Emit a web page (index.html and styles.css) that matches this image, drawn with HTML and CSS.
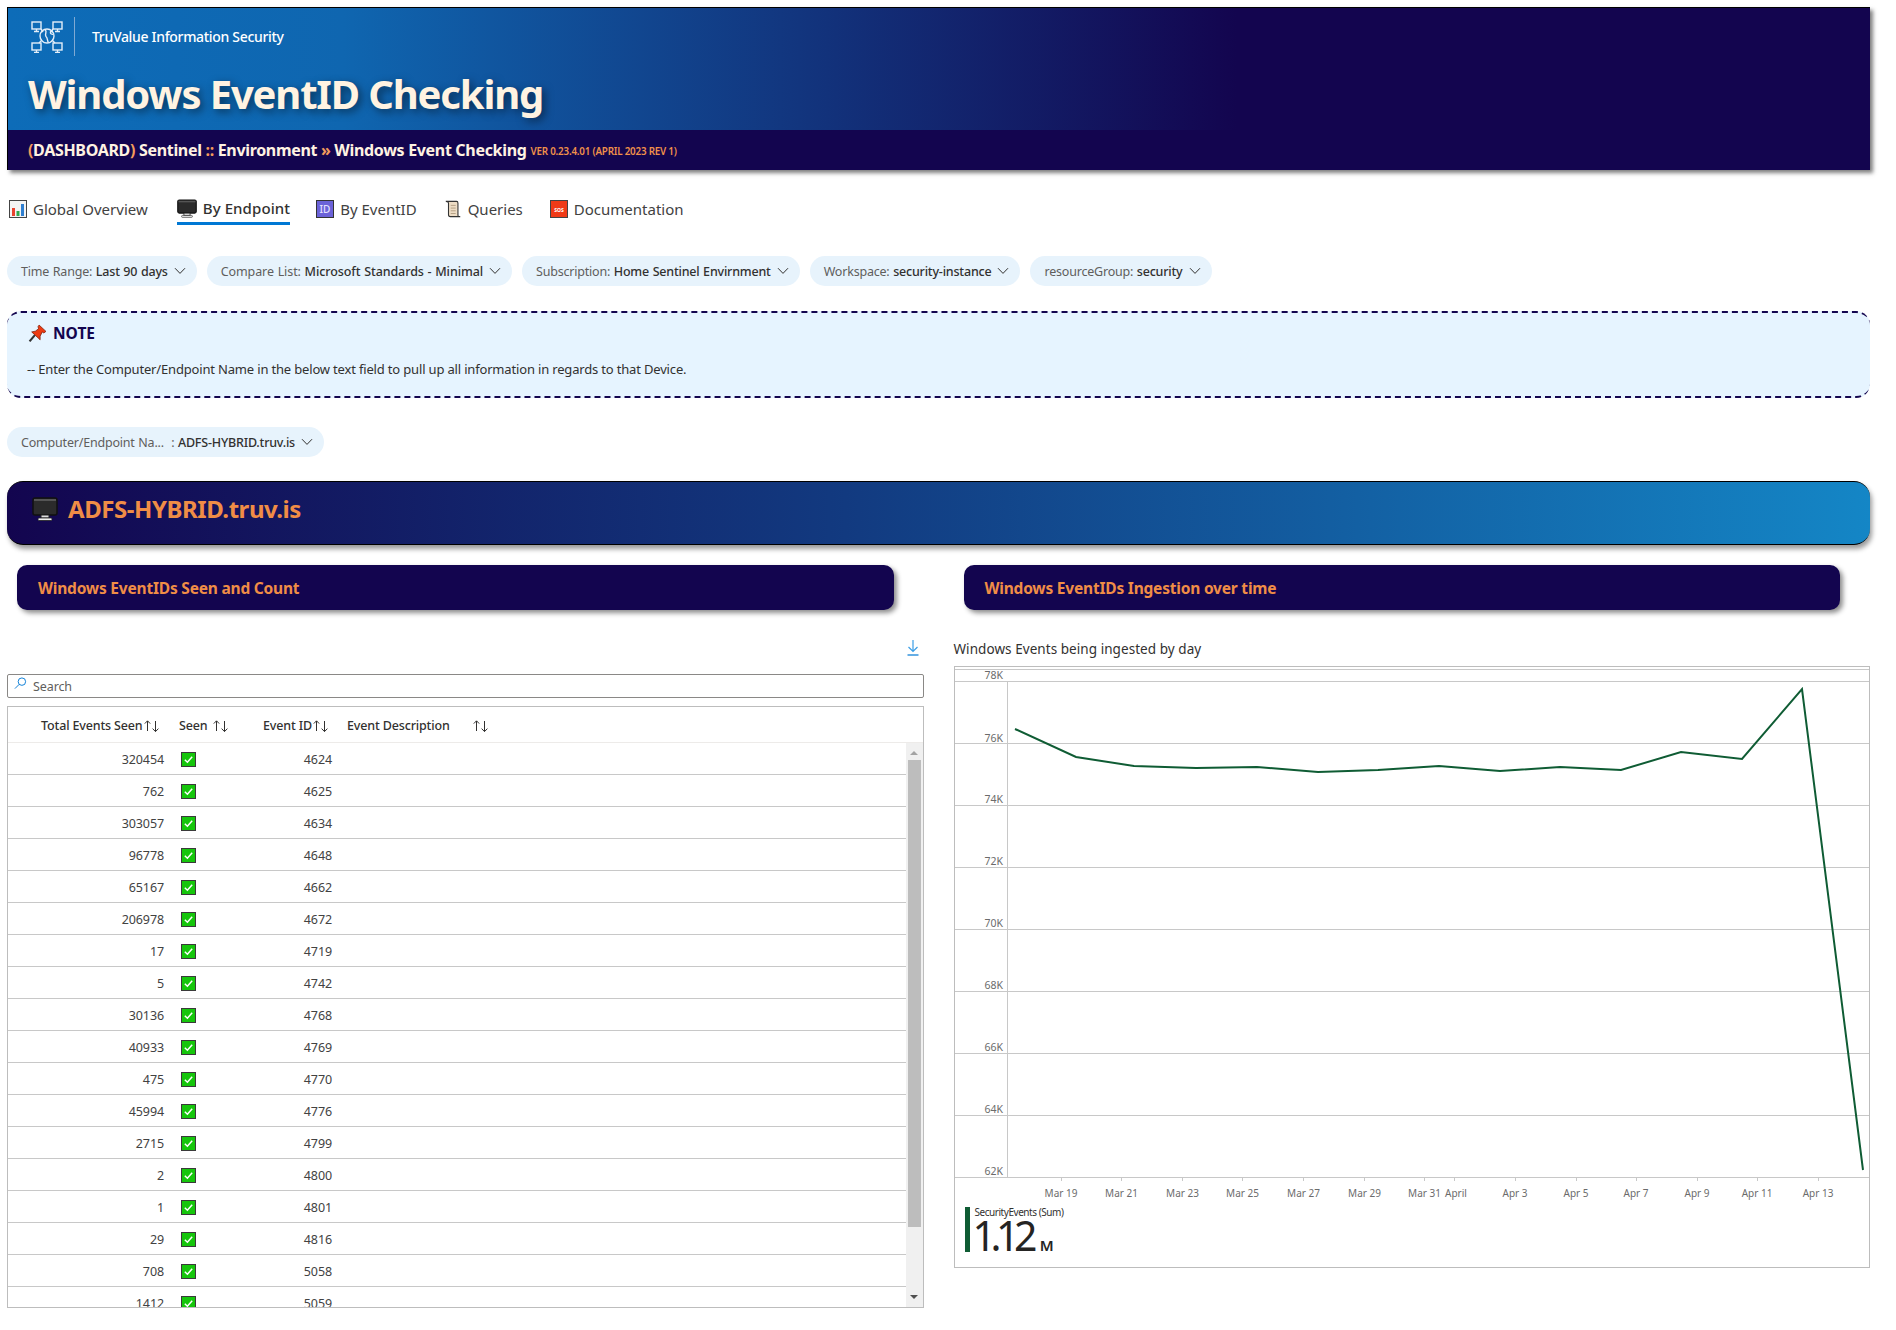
FILE: index.html
```html
<!DOCTYPE html>
<html lang="en">
<head>
    <meta charset="UTF-8">
    <title>Windows EventID Checking</title>
    <link rel="stylesheet" href="styles.css">
</head>
<body>
    <svg class="defs">
        <symbol id="chev" viewBox="0 0 12 8"><path d="M1 1.2 6 6.4 11 1.2" fill="none" stroke="#323130" stroke-width="1"/></symbol>
        <symbol id="sort" viewBox="0 0 17 14"><path d="M4.5 12V2M1.8 4.6 4.5 1.8 7.2 4.6M12.5 2V12.5M9.6 9.6 12.5 12.6 15.4 9.6" fill="none" stroke="#323130" stroke-width="1"/></symbol>
        <symbol id="check" viewBox="0 0 15 15"><rect x=".5" y=".5" width="14" height="14" fill="#16c60c" stroke="#3a3a3a"/><path d="M3.8 7.8 6.4 10.2 11.2 4.8" fill="none" stroke="#fff" stroke-width="1.5"/></symbol>
        <symbol id="monitor" viewBox="0 0 26 24"><rect x="1" y="1" width="24" height="17" rx="2" fill="#2b2b2b" stroke="#111" stroke-width="1.5"/><rect x="2" y="2" width="22" height="2" fill="#555"/><rect x="9" y="18" width="8" height="3" fill="#ddd" stroke="#222"/><rect x="6" y="21" width="14" height="2.5" rx="1" fill="#eee" stroke="#222" stroke-width=".8"/></symbol>
    </svg>

    <header class="top">
        <div class="top-blue">
            <div class="brand">
                <svg class="logo" viewBox="0 0 33 32" fill="none" stroke="#e4eef8" stroke-width="1.4">
                    <rect x="1" y="1" width="9" height="7"/><path d="M3 10.5H8M5.5 8V10.5"/>
                    <rect x="22" y="1" width="9" height="7"/><path d="M24 10.5H29M26.5 8V10.5"/>
                    <rect x="1" y="22" width="9" height="7"/><path d="M3 31.5H8M5.5 29V31.5"/>
                    <rect x="22" y="22" width="9" height="7"/><path d="M24 31.5H29M26.5 29V31.5"/>
                    <path d="M10 8 12 11M22 8 20 11M8 22 11 19M24 22 21 19"/>
                    <circle cx="16" cy="15" r="7"/>
                    <path d="M14 8.5C17 11 13 13 15 15.5 17 17 16 20 17.5 21.5M20 10C18 13 22 14 22.5 13" />
                </svg>
                <span class="brand-name">TruValue Information Security</span>
            </div>
            <h1 class="top-title">Windows EventID Checking</h1>
        </div>
        <div class="crumbs">
            <b><i>(</i>DASHBOARD<i>)</i> Sentinel <i>::</i> Environment <i>»</i> Windows Event Checking</b>
            <small>VER 0.23.4.01 (APRIL 2023 REV 1)</small>
        </div>
    </header>

    <nav class="tabs">
        <a class="tab">
            <svg class="tab-icon" viewBox="0 0 18 18"><rect x=".5" y=".5" width="17" height="17" fill="#f4f4f4" stroke="#444"/><rect x="3" y="8" width="3" height="8" fill="#e8432e"/><rect x="7.5" y="11" width="3" height="5" fill="#2fa84f"/><rect x="12" y="4" width="3" height="12" fill="#2f7fd0"/></svg>
            Global Overview
        </a>
        <a class="tab active">
            <svg class="tab-icon wide"><use href="#monitor"/></svg>
            By Endpoint
        </a>
        <a class="tab">
            <svg class="tab-icon" viewBox="0 0 18 18"><rect x=".5" y=".5" width="17" height="17" fill="#6b62d8" stroke="#333"/><text x="9" y="13" text-anchor="middle" class="id-glyph">ID</text></svg>
            By EventID
        </a>
        <a class="tab">
            <svg class="tab-icon" viewBox="0 0 18 20"><path d="M1 1.5H13C14 1.5 14.5 2.5 14.5 3.5V17C14.5 18 15.5 18.8 17 18.5H6C4.5 18.5 4 17.5 4 16.5V3.5C4 2.5 3 1.5 1 1.5Z" fill="#eddcc4" stroke="#333" stroke-width="1.2"/><path d="M6.5 6H12M6.5 9H12M6.5 12H12M6.5 15H12" stroke="#b09b80"/></svg>
            Queries
        </a>
        <a class="tab">
            <svg class="tab-icon" viewBox="0 0 18 18"><rect x=".5" y=".5" width="17" height="17" fill="#f03a17" stroke="#444"/><text x="9" y="11.5" text-anchor="middle" class="sos-glyph">SOS</text></svg>
            Documentation
        </a>
    </nav>

    <div class="pills">
        <div class="pill">Time Range: <b>Last 90 days</b><svg class="chev"><use href="#chev"/></svg></div>
        <div class="pill loose">Compare List: <b>Microsoft Standards - Minimal</b><svg class="chev"><use href="#chev"/></svg></div>
        <div class="pill">Subscription: <b>Home Sentinel Envirnment</b><svg class="chev"><use href="#chev"/></svg></div>
        <div class="pill">Workspace: <b>security-instance</b><svg class="chev"><use href="#chev"/></svg></div>
        <div class="pill">resourceGroup: <b>security</b><svg class="chev"><use href="#chev"/></svg></div>
    </div>

    <section class="note">
        <h3 class="note-title">
            <svg class="pin" viewBox="0 0 18 18"><path d="M1.5 16.5 6.5 10.5" stroke="#333" stroke-width="2"/><path d="M10.5 1 17 7 15 8.5 13.5 7.5 11.5 11.5 11.5 15 3.5 7.5 7 6.8 10 4.5 9.5 2.5Z" fill="#ee3b12" stroke="#7c1a05" stroke-width=".7"/></svg>
            NOTE
        </h3>
        <p class="note-text">-- Enter the Computer/Endpoint Name in the below text field to pull up all information in regards to that Device.</p>
    </section>

    <div class="pills endpoint">
        <div class="pill">Computer/Endpoint Na... &nbsp;: <b>ADFS-HYBRID.truv.is</b><svg class="chev"><use href="#chev"/></svg></div>
    </div>

    <div class="banner">
        <svg class="banner-icon"><use href="#monitor"/></svg>
        ADFS-HYBRID.truv.is
    </div>

    <div class="columns">
        <div class="col">
            <div class="col-head">Windows EventIDs Seen and Count</div>
            <div class="tools">
                <svg class="download" viewBox="0 0 12 16" fill="none" stroke="#3b9ee6" stroke-width="1.2"><path d="M6 0V11M1.5 7 6 11.5 10.5 7"/><path d="M.5 15H11.5" stroke="#0078d4"/></svg>
            </div>
            <div class="search">
                <svg class="search-icon" viewBox="0 0 14 14" fill="none" stroke="#0078d4" stroke-width="1"><circle cx="8.5" cy="5" r="4"/><path d="M5.5 8 1 12.5"/></svg>
                Search
            </div>
            <div class="grid">
                <div class="grid-head">
                    <div class="h h-total">Total Events Seen<svg class="sort"><use href="#sort"/></svg></div>
                    <div class="h h-seen">Seen<svg class="sort"><use href="#sort"/></svg></div>
                    <div class="h h-id">Event ID<svg class="sort"><use href="#sort"/></svg></div>
                    <div class="h h-desc">Event Description<svg class="sort"><use href="#sort"/></svg></div>
                </div>
                <div class="grid-body">
                    <div class="rows">
                        <div class="row"><span>320454</span><svg class="chk"><use href="#check"/></svg><span>4624</span></div>
                        <div class="row"><span>762</span><svg class="chk"><use href="#check"/></svg><span>4625</span></div>
                        <div class="row"><span>303057</span><svg class="chk"><use href="#check"/></svg><span>4634</span></div>
                        <div class="row"><span>96778</span><svg class="chk"><use href="#check"/></svg><span>4648</span></div>
                        <div class="row"><span>65167</span><svg class="chk"><use href="#check"/></svg><span>4662</span></div>
                        <div class="row"><span>206978</span><svg class="chk"><use href="#check"/></svg><span>4672</span></div>
                        <div class="row"><span>17</span><svg class="chk"><use href="#check"/></svg><span>4719</span></div>
                        <div class="row"><span>5</span><svg class="chk"><use href="#check"/></svg><span>4742</span></div>
                        <div class="row"><span>30136</span><svg class="chk"><use href="#check"/></svg><span>4768</span></div>
                        <div class="row"><span>40933</span><svg class="chk"><use href="#check"/></svg><span>4769</span></div>
                        <div class="row"><span>475</span><svg class="chk"><use href="#check"/></svg><span>4770</span></div>
                        <div class="row"><span>45994</span><svg class="chk"><use href="#check"/></svg><span>4776</span></div>
                        <div class="row"><span>2715</span><svg class="chk"><use href="#check"/></svg><span>4799</span></div>
                        <div class="row"><span>2</span><svg class="chk"><use href="#check"/></svg><span>4800</span></div>
                        <div class="row"><span>1</span><svg class="chk"><use href="#check"/></svg><span>4801</span></div>
                        <div class="row"><span>29</span><svg class="chk"><use href="#check"/></svg><span>4816</span></div>
                        <div class="row"><span>708</span><svg class="chk"><use href="#check"/></svg><span>5058</span></div>
                        <div class="row"><span>1412</span><svg class="chk"><use href="#check"/></svg><span>5059</span></div>
                    </div>
                    <div class="scrollbar">
                        <div class="arrow up"></div>
                        <div class="thumb"></div>
                        <div class="arrow down"></div>
                    </div>
                </div>
            </div>
        </div>

        <div class="col">
            <div class="col-head">Windows EventIDs Ingestion over time</div>
            <div class="chart-title">Windows Events being ingested by day</div>
            <div class="chart">
                <svg class="plot" viewBox="0 0 914 530">
                    <g class="gridlines">
                        <path d="M0 2H914M0 14H914M0 76H914M0 138H914M0 200H914M0 262H914M0 324H914M0 386H914M0 448H914M0 510H914M52 14V510"/>
                        <path d="M106 510V514M166.5 510V514M227.5 510V514M287.5 510V514M348.5 510V514M409.5 510V514M469.5 510V514M499 510V514M560 510V514M621 510V514M681 510V514M742 510V514M802 510V514M863 510V514"/>
                    </g>
                    <g class="ylabels">
                        <text x="48" y="12">78K</text>
                        <text x="48" y="75">76K</text>
                        <text x="48" y="136">74K</text>
                        <text x="48" y="198">72K</text>
                        <text x="48" y="260">70K</text>
                        <text x="48" y="322">68K</text>
                        <text x="48" y="384">66K</text>
                        <text x="48" y="446">64K</text>
                        <text x="48" y="508">62K</text>
                    </g>
                    <g class="xlabels">
                        <text x="106" y="530">Mar 19</text>
                        <text x="166.5" y="530">Mar 21</text>
                        <text x="227.5" y="530">Mar 23</text>
                        <text x="287.5" y="530">Mar 25</text>
                        <text x="348.5" y="530">Mar 27</text>
                        <text x="409.5" y="530">Mar 29</text>
                        <text x="469.5" y="530">Mar 31</text>
                        <text x="501" y="530">April</text>
                        <text x="560" y="530">Apr 3</text>
                        <text x="621" y="530">Apr 5</text>
                        <text x="681" y="530">Apr 7</text>
                        <text x="742" y="530">Apr 9</text>
                        <text x="802" y="530">Apr 11</text>
                        <text x="863" y="530">Apr 13</text>
                    </g>
                    <polyline class="series" points="60,62 121,90 179,99 241,101 302,100 363,105 423,103 484,99 545,104 605,100 666,103 726,85 787,92 847,22 908,503"/>
                </svg>
                <div class="legend">
                    <div class="legend-bar"></div>
                    <div>
                        <div class="legend-name">SecurityEvents (Sum)</div>
                        <div class="legend-value">1.12<span>M</span></div>
                    </div>
                </div>
            </div>
        </div>
    </div>
</body>
</html>
```

FILE: styles.css
```css
body {
    margin: 0;
    padding: 7px 26px 0 7px;
    font-family: "Noto Sans", "Open Sans", sans-serif;
    font-size: 13px;
    color: #323130;
    background-color: #fff;
    overflow: hidden;
}

.defs {
    display: none;
}

/* header */
.top {
    height: 163px;
    box-sizing: border-box;
    border-top: 1px solid #000;
    border-left: 1px solid #000;
    box-shadow: 3px 3px 4px rgba(0, 0, 0, 0.5);
    display: flex;
    flex-direction: column;
}

.top-blue {
    height: 122px;
    background: linear-gradient(90deg, #0d6cb8 0%, #0f66b0 18%, #12367f 42%, #13054f 66%, #13054f 100%);
    padding: 9px 0 0 23px;
    box-sizing: border-box;
}

.brand {
    display: flex;
    align-items: center;
    height: 39px;
    color: #fff;
}

.logo {
    width: 33px;
    height: 32px;
    margin-right: 10px;
}

.brand-name {
    border-left: 1px solid #7fa9d3;
    height: 39px;
    line-height: 39px;
    padding-left: 17px;
    font-size: 14px;
    font-weight: 500;
    letter-spacing: -0.32px;
}

.top-title {
    margin: 12px 0 0 -3px;
    font-size: 40px;
    line-height: 52px;
    font-weight: 700;
    letter-spacing: -1.15px;
    color: #fff3e2;
    text-shadow: 3px 3px 8px rgba(0, 0, 0, 0.5);
}

.crumbs {
    flex: 1;
    background-color: #13054f;
    padding-left: 20px;
    display: flex;
    align-items: center;
    color: #fff3e2;
    font-size: 16px;
    letter-spacing: -0.32px;
}

.crumbs i {
    font-style: normal;
    color: #f29c5c;
}

.crumbs small {
    margin-left: 4px;
    margin-top: 3px;
    font-size: 9.8px;
    font-weight: 600;
    color: #f0914a;
    letter-spacing: -0.2px;
}

/* tabs */
.tabs {
    display: flex;
    margin-top: 24px;
    height: 31px;
}

.tab {
    display: flex;
    align-items: center;
    gap: 6px;
    font-size: 15px;
    margin-right: 25px;
    padding: 0 0 2px 2px;
    box-sizing: border-box;
    height: 31px;
    color: #424242;
}

.tab.active {
    margin-left: 4px;
    margin-right: 24px;
    color: #323130;
    font-weight: 500;
    letter-spacing: 0.1px;
    border-bottom: 3px solid #0078d4;
    padding: 0;
}

.tab-icon {
    width: 18px;
    height: 18px;
}

.tab-icon.wide {
    width: 20px;
    height: 19px;
}

.id-glyph {
    font-size: 10px;
    font-weight: 500;
    fill: #e4e0ff;
}

.sos-glyph {
    font-size: 5px;
    font-weight: 700;
    fill: #fff;
}

/* filter pills */
.pills {
    display: flex;
    gap: 10px;
    margin-top: 31px;
}

.pills.endpoint {
    margin-top: 29px;
}

.pill {
    height: 30px;
    padding: 0 11px 0 14px;
    display: flex;
    align-items: center;
    white-space: pre;
    border-radius: 15px;
    background-color: #e7f3fc;
    color: #605e5c;
    font-size: 12.5px;
    letter-spacing: -0.2px;
    word-spacing: 0.6px;
}

.pill.loose {
    letter-spacing: -0.09px;
}

.pill b {
    font-weight: 500;
    color: #323130;
}

.chev {
    width: 12px;
    height: 8px;
    margin-left: 6px;
}

/* note */
.note {
    margin-top: 25px;
    height: 87px;
    box-sizing: border-box;
    padding: 8px 20px 0 20px;
    background-color: #e6f4ff;
    border-top: 2px dashed #13054f;
    border-bottom: 2px dashed #13054f;
    border-radius: 14px;
}

.note-title {
    margin: 0 0 0 1px;
    display: flex;
    align-items: center;
    gap: 6px;
    font-size: 15.5px;
    font-weight: 700;
    color: #13054f;
    height: 24px;
}

.pin {
    width: 19px;
    height: 19px;
}

.note-text {
    margin: 15px 0 0;
    font-size: 13px;
    letter-spacing: -0.17px;
}

/* endpoint banner */
.banner {
    margin-top: 24px;
    height: 64px;
    box-sizing: border-box;
    display: flex;
    align-items: center;
    gap: 10px;
    padding: 0 0 9px 25px;
    border-top: 1px solid #000;
    border-bottom: 1px solid #000;
    border-radius: 16px;
    background: linear-gradient(90deg, #13054f 0%, #123a80 45%, #1486c6 100%);
    box-shadow: 2px 4px 5px rgba(0, 0, 0, 0.4);
    color: #f08d46;
    font-size: 24px;
    font-weight: 700;
    letter-spacing: -0.45px;
}

.banner-icon {
    width: 26px;
    height: 24px;
}

/* columns */
.columns {
    display: grid;
    grid-template-columns: 1fr 1fr;
    gap: 30px;
}

.col-head {
    margin: 20px 30px 0 10px;
    height: 45px;
    padding-left: 21px;
    display: flex;
    align-items: center;
    background-color: #13054f;
    border-radius: 10px;
    box-shadow: 3px 3px 5px rgba(0, 0, 0, 0.45);
    color: #f08d46;
    font-size: 15.5px;
    font-weight: 700;
    letter-spacing: -0.2px;
}

.tools {
    margin-top: 30px;
    height: 16px;
    display: flex;
    justify-content: flex-end;
    padding-right: 5px;
}

.download {
    width: 12px;
    height: 16px;
}

.search {
    margin-top: 18px;
    height: 24px;
    box-sizing: border-box;
    border: 1px solid #8a8886;
    border-radius: 2px;
    display: flex;
    align-items: center;
    gap: 6px;
    padding: 0 0 0 6px;
    font-size: 12.5px;
    letter-spacing: -0.1px;
    color: #605e5c;
}

.search-icon {
    width: 13px;
    height: 13px;
    margin-top: -5px;
}

.grid {
    margin-top: 8px;
    height: 602px;
    box-sizing: border-box;
    border: 1px solid #bdbdbd;
    display: flex;
    flex-direction: column;
}

.grid-head {
    height: 36px;
    flex-shrink: 0;
    box-sizing: border-box;
    padding-top: 2px;
    border-bottom: 1px solid #edebe9;
    display: grid;
    grid-template-columns: 156px 85px 89px 1fr;
    align-items: center;
    font-size: 12.5px;
    font-weight: 500;
    letter-spacing: -0.15px;
}

.h {
    display: flex;
    align-items: center;
}

.h-total {
    padding-left: 33px;
}

.h-seen {
    padding-left: 15px;
}

.h-seen .sort {
    margin-left: 5px;
}

.h-id {
    padding-left: 14px;
}

.h-desc {
    padding-left: 9px;
}

.h-desc .sort {
    margin-left: 22px;
}

.sort {
    width: 17px;
    height: 14px;
    flex-shrink: 0;
}

.grid-body {
    flex: 1;
    min-height: 0;
    display: flex;
}

.rows {
    flex: 1;
    overflow: hidden;
}

.row {
    height: 32px;
    box-sizing: border-box;
    padding-top: 1px;
    border-bottom: 1px solid #c8c8c8;
    display: grid;
    grid-template-columns: 156px 32px 136px;
    align-items: center;
    font-size: 12.5px;
    letter-spacing: -0.1px;
    color: #424242;
}

.row span {
    text-align: right;
}

.chk {
    width: 15px;
    height: 15px;
    margin-left: 17px;
}

.scrollbar {
    width: 17px;
    background-color: #f0f0f0;
    display: flex;
    flex-direction: column;
    align-items: center;
    padding-top: 8px;
    padding-bottom: 8px;
    box-sizing: border-box;
}

.arrow {
    width: 0;
    height: 0;
    border-left: 4px solid transparent;
    border-right: 4px solid transparent;
}

.arrow.up {
    border-bottom: 4px solid #a3a3a3;
}

.arrow.down {
    margin-top: auto;
    border-top: 4px solid #505050;
}

.thumb {
    width: 13px;
    height: 467px;
    margin-top: 5px;
    background-color: #bdbdbd;
}

/* chart */
.chart-title {
    margin-top: 29px;
    height: 20px;
    line-height: 20px;
    font-size: 13.5px;
    letter-spacing: 0.06px;
}

.chart {
    margin-top: 7px;
    height: 602px;
    box-sizing: border-box;
    border: 1px solid #bdbdbd;
}

.plot {
    display: block;
    width: 914px;
    height: 530px;
    overflow: visible;
}

.gridlines path {
    fill: none;
    stroke: #c8c8c8;
    stroke-width: 1;
    shape-rendering: crispEdges;
}

.ylabels text {
    font-size: 10.5px;
    fill: #6b6b6b;
    text-anchor: end;
}

.xlabels text {
    font-size: 10px;
    fill: #6b6b6b;
    text-anchor: middle;
}

.series {
    fill: none;
    stroke: #0f5c34;
    stroke-width: 2;
}

.legend {
    display: flex;
    gap: 5px;
    margin: 10px 0 0 10px;
}

.legend-bar {
    width: 5px;
    height: 45px;
    background-color: #0f5c34;
}

.legend-name {
    margin-top: -1px;
    font-size: 10px;
    line-height: 13px;
    letter-spacing: -0.45px;
}

.legend-value {
    margin-left: -2px;
    font-size: 41px;
    line-height: 33px;
    letter-spacing: -5.5px;
    color: #252423;
}

.legend-value span {
    margin-left: 8px;
    font-size: 15px;
    font-weight: 600;
    letter-spacing: 0;
}
```
